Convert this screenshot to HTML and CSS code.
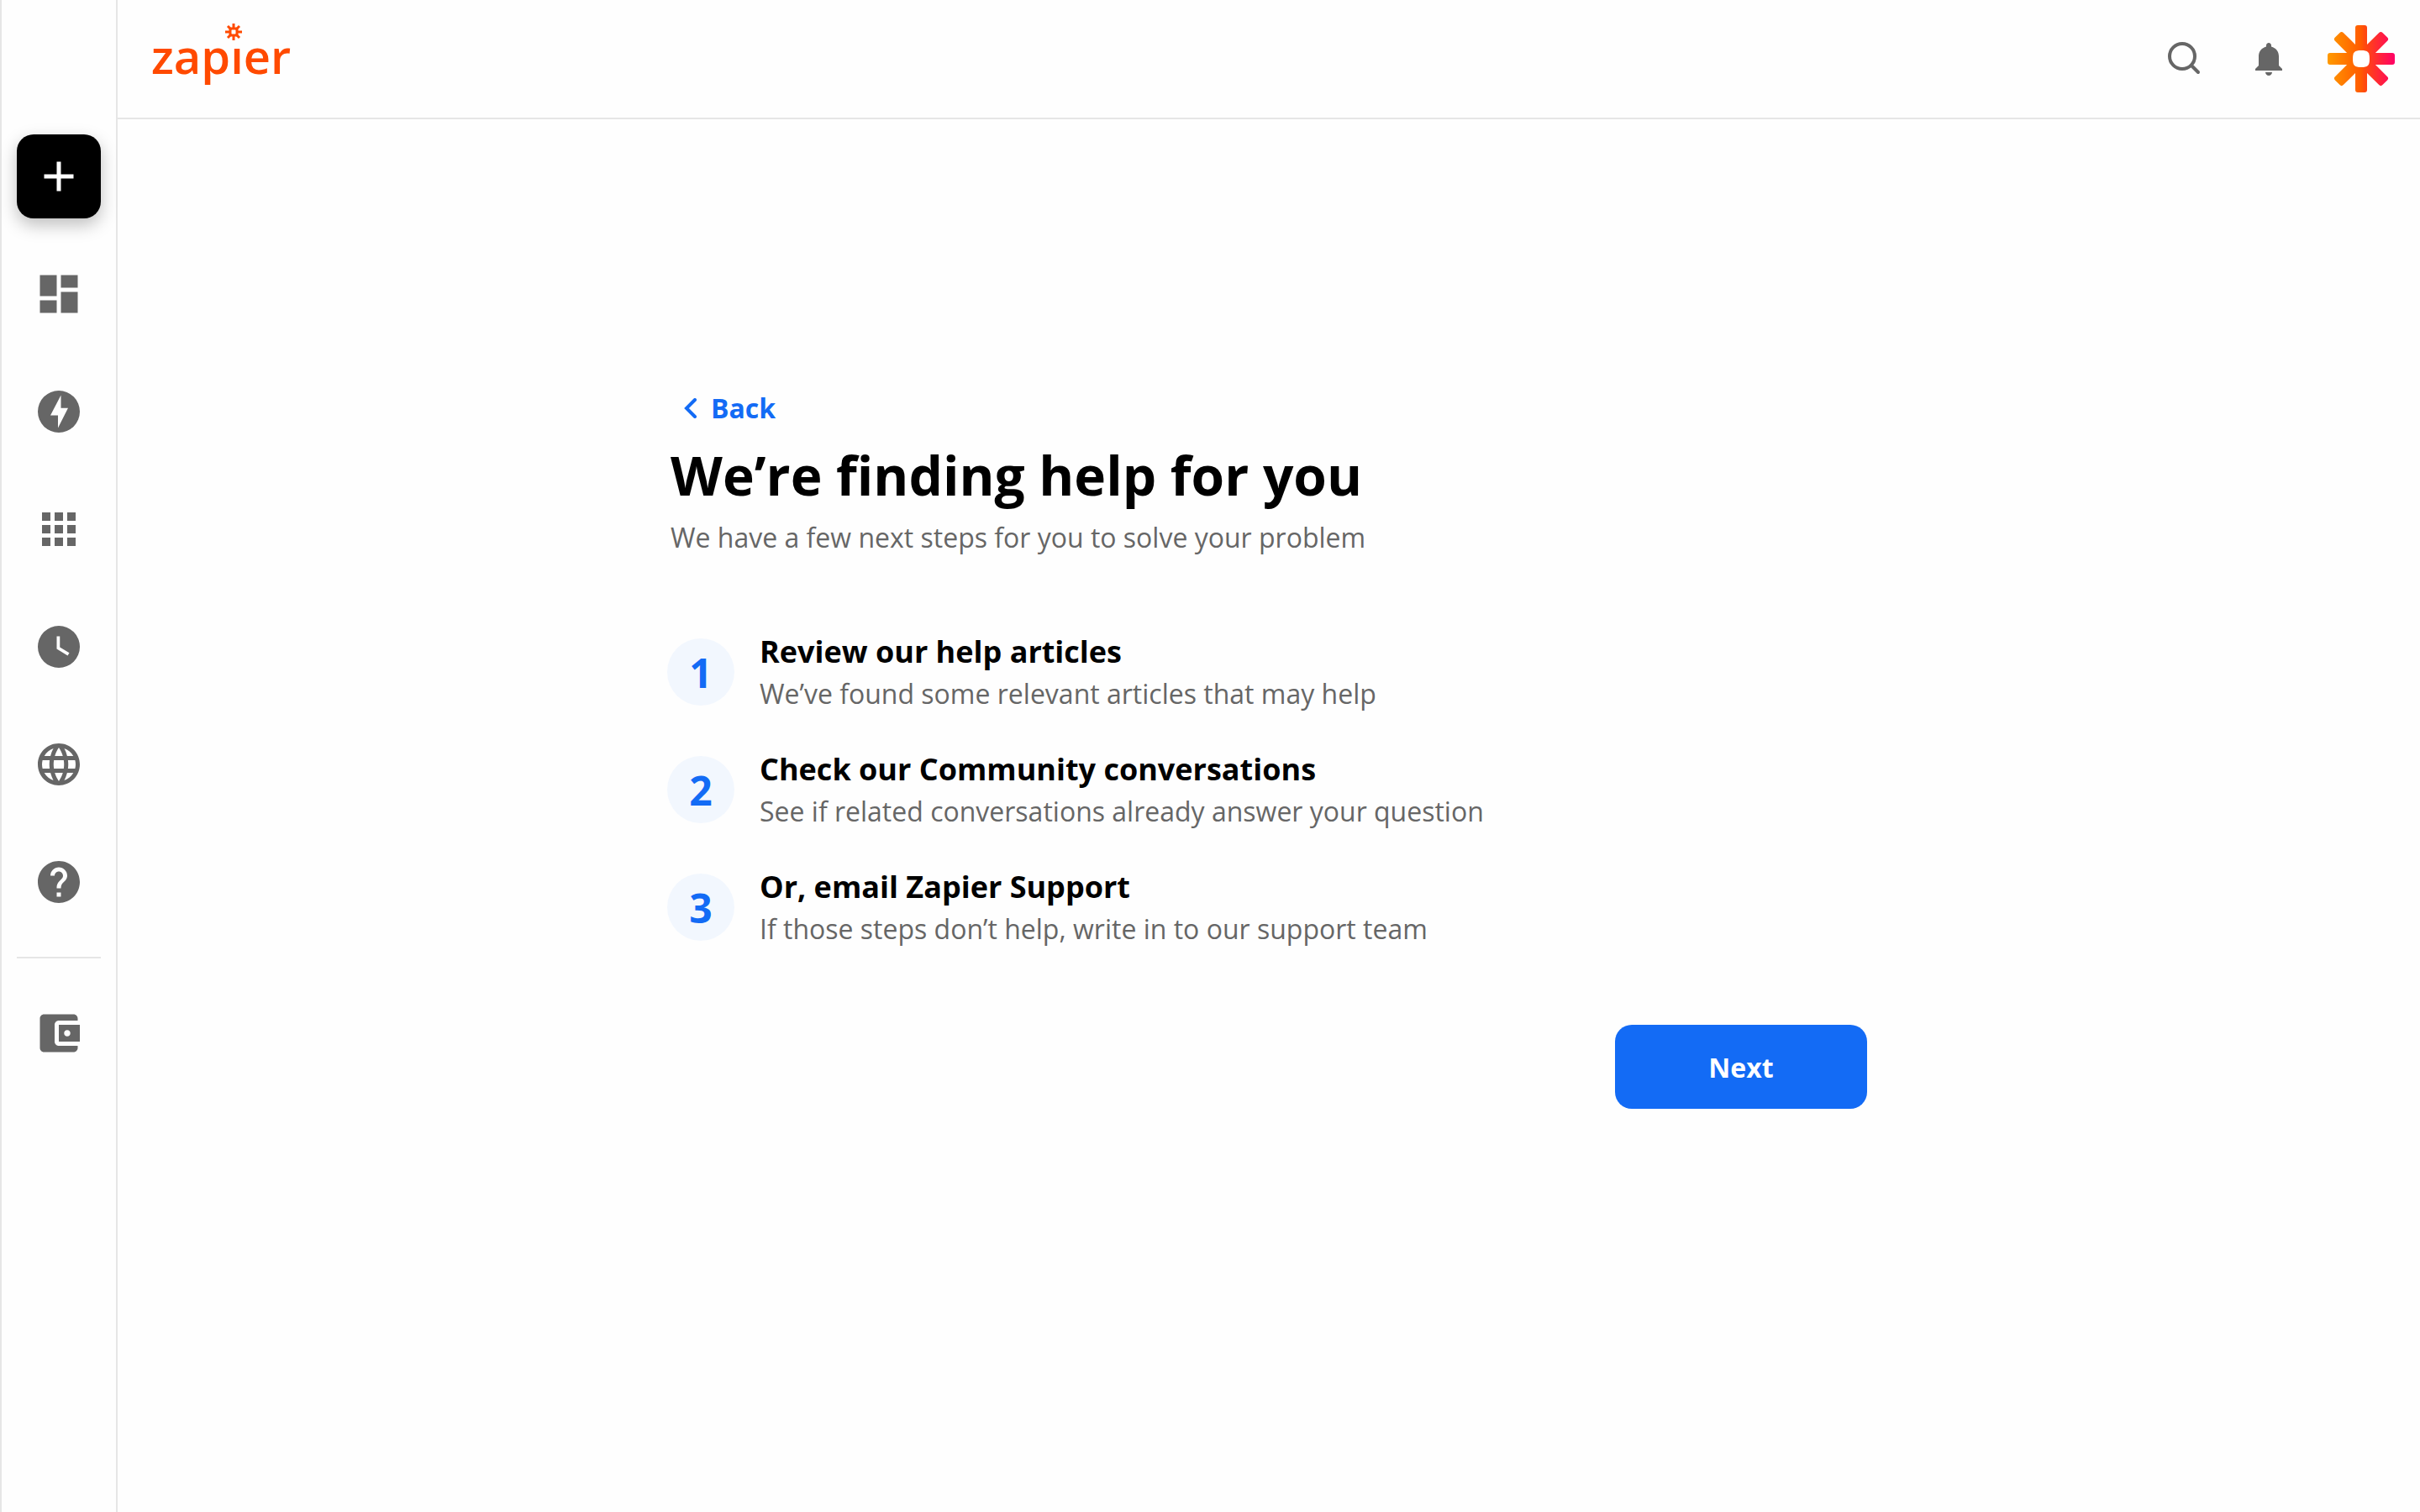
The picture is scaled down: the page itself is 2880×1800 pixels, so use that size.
FILE: index.html
```html
<!DOCTYPE html>
<html lang="en">
<head>
<meta charset="utf-8">
<meta name="viewport" content="width=device-width, initial-scale=1">
<title>Get help | Zapier</title>
<link rel="stylesheet" href="styles.css">
</head>
<body>
<div class="app">
  <nav class="sidebar" aria-label="Main">
    <button class="create" type="button" aria-label="Create Zap">
      <svg class="nav-icon" viewBox="0 0 24 24"><path d="M19 13h-6v6h-2v-6H5v-2h6V5h2v6h6v2z"/></svg>
    </button>
    <a class="nav-link" href="#" aria-label="Dashboard"><svg class="nav-icon" viewBox="0 0 24 24"><path d="M3 13h8V3H3v10zm0 8h8v-6H3v6zm10 0h8V11h-8v10zm0-18v6h8V3h-8z"/></svg></a>
    <a class="nav-link" href="#" aria-label="Zaps"><svg class="nav-icon" viewBox="0 0 24 24"><path fill-rule="evenodd" d="M12 2a10 10 0 1 0 0 20 10 10 0 0 0 0-20zM11.6 19.8v-6H8L13 4.2v6.100h3.400z"/></svg></a>
    <a class="nav-link" href="#" aria-label="Apps"><svg class="nav-icon" viewBox="0 0 24 24"><path d="M4 8h4V4H4v4zm6 12h4v-4h-4v4zm-6 0h4v-4H4v4zm0-6h4v-4H4v4zm6 0h4v-4h-4v4zm6-10v4h4V4h-4zm-6 4h4V4h-4v4zm6 6h4v-4h-4v4zm0 6h4v-4h-4v4z"/></svg></a>
    <a class="nav-link" href="#" aria-label="History"><svg class="nav-icon" viewBox="0 0 24 24"><path fill-rule="evenodd" d="M12 2a10 10 0 1 0 0 20 10 10 0 0 0 0-20zm4.200 14.200L11 13V7h1.500v5.200l4.500 2.700z"/></svg></a>
    <a class="nav-link" href="#" aria-label="Explore"><svg class="nav-icon" viewBox="0 0 24 24"><path d="M11.990 2C6.470 2 2 6.480 2 12s4.470 10 9.990 10C17.520 22 22 17.520 22 12S17.520 2 11.990 2zm6.930 6h-2.950c-.32-1.250-.78-2.450-1.380-3.560 1.840.63 3.370 1.910 4.330 3.560zM12 4.040c.83 1.200 1.480 2.530 1.910 3.960h-3.820c.43-1.430 1.080-2.760 1.910-3.960zM4.260 14C4.100 13.360 4 12.690 4 12s.1-1.360.26-2h3.380c-.08.66-.14 1.320-.14 2 0 .68.06 1.340.14 2H4.260zm.82 2h2.950c.32 1.250.78 2.450 1.380 3.560-1.840-.63-3.370-1.900-4.330-3.560zm2.950-8H5.080c.96-1.660 2.490-2.930 4.330-3.560C8.810 5.550 8.350 6.750 8.030 8zM12 19.960c-.83-1.200-1.480-2.530-1.910-3.960h3.820c-.43 1.430-1.080 2.760-1.910 3.960zM14.340 14H9.660c-.09-.66-.16-1.320-.16-2 0-.68.07-1.350.16-2h4.680c.09.65.16 1.320.16 2 0 .68-.07 1.340-.16 2zm.25 5.560c.6-1.110 1.060-2.310 1.380-3.560h2.950c-.96 1.650-2.490 2.930-4.330 3.560zM16.360 14c.08-.66.14-1.320.14-2 0-.68-.06-1.340-.14-2h3.380c.16.64.26 1.310.26 2s-.1 1.360-.26 2h-3.380z"/></svg></a>
    <a class="nav-link" href="#" aria-label="Help"><svg class="nav-icon" viewBox="0 0 24 24"><path d="M12 2C6.480 2 2 6.480 2 12s4.480 10 10 10 10-4.480 10-10S17.520 2 12 2zm1 17h-2v-2h2v2zm2.070-7.750l-.9.92C13.450 12.900 13 13.500 13 15h-2v-.5c0-1.100.45-2.100 1.170-2.830l1.240-1.260c.37-.36.59-.86.59-1.410 0-1.100-.9-2-2-2s-2 .9-2 2H8c0-2.210 1.790-4 4-4s4 1.790 4 4c0 .88-.36 1.680-.93 2.250z"/></svg></a>
    <hr class="divider">
    <a class="nav-link" href="#" aria-label="Billing"><svg class="nav-icon" viewBox="0 0 24 24"><path d="M21 18v1c0 1.100-.9 2-2 2H5c-1.110 0-2-.9-2-2V5c0-1.100.89-2 2-2h14c1.100 0 2 .9 2 2v1h-9c-1.110 0-2 .9-2 2v8c0 1.100.89 2 2 2h9zm-9-2h10V8H12v8zm4-2.500c-.83 0-1.500-.67-1.500-1.500s.67-1.500 1.500-1.500 1.500.67 1.500 1.500-.67 1.500-1.500 1.500z"/></svg></a>
  </nav>
  <div class="page">
    <header class="topbar">
      <a class="logo" href="#" aria-label="zapier">zapıer<svg class="logo-spark" viewBox="0 0 20 20"><path d="M10 0v6.500M10 13.500V20M0 10h6.500M13.500 10H20M3 3l4.500 4.500M17 3l-4.500 4.500M3 17l4.500-4.500M17 17l-4.500-4.500"/><rect x="6" y="6" width="8" height="8" rx="1"/></svg></a>
      <div class="tools">
        <button class="tool" type="button" aria-label="Search"><svg class="tool-icon" viewBox="0 0 48 48"><g fill="none" stroke="currentColor" stroke-width="4"><circle cx="21" cy="21" r="15"/><path stroke-linecap="round" d="M32 32l8 8"/></g></svg></button>
        <button class="tool" type="button" aria-label="Notifications"><svg class="tool-icon" viewBox="0 0 24 24"><path d="M12 22c1.100 0 2-.9 2-2h-4c0 1.100.9 2 2 2zM18 16v-5.500c0-3-1.700-5-4.500-5.800V4c0-.83-.67-1.500-1.500-1.500s-1.500.67-1.500 1.500v.7C7.700 5.500 6 7.500 6 10.500V16l-2 2v1h16v-1z"/></svg></button>
        <button class="avatar" type="button" aria-label="Account">
          <svg class="avatar-icon" viewBox="0 0 80 80">
            <defs>
              <linearGradient id="spark" gradientUnits="userSpaceOnUse" x1="0" y1="0" x2="80" y2="0"><stop offset="0" stop-color="#ff9a00"/><stop offset=".5" stop-color="#ff5a00"/><stop offset=".55" stop-color="#ff4a0d"/><stop offset="1" stop-color="#ff0066"/></linearGradient>
              <clipPath id="rays"><rect x="33" width="14" height="80" rx="3"/><rect y="33" width="80" height="14" rx="3"/><rect x="33" width="14" height="80" rx="3" transform="rotate(45 40 40)"/><rect x="33" width="14" height="80" rx="3" transform="rotate(-45 40 40)"/></clipPath>
            </defs>
            <rect width="80" height="80" fill="url(#spark)" clip-path="url(#rays)"/>
            <path fill="#fff" d="M40 30c8 0 10 2 10 10s-2 10-10 10-10-2-10-10 2-10 10-10z"/>
          </svg>
        </button>
      </div>
    </header>
    <main class="content">
      <section class="panel">
        <div class="intro">
          <a class="back" href="#"><svg class="back-icon" viewBox="0 0 16 24"><path d="M13 2L3 12l10 10"/></svg>Back</a>
          <h1 class="title">We’re finding help for you</h1>
          <p class="lead">We have a few next steps for you to solve your problem</p>
        </div>
        <ol class="steps">
          <li class="step"><span class="number">1</span><div class="step-text"><h2 class="step-title">Review our help articles</h2><p class="step-note">We’ve found some relevant articles that may help</p></div></li>
          <li class="step"><span class="number">2</span><div class="step-text"><h2 class="step-title">Check our Community conversations</h2><p class="step-note">See if related conversations already answer your question</p></div></li>
          <li class="step"><span class="number">3</span><div class="step-text"><h2 class="step-title">Or, email Zapier Support</h2><p class="step-note">If those steps don’t help, write in to our support team</p></div></li>
        </ol>
        <button class="next" type="button">Next</button>
      </section>
    </main>
  </div>
</div>
</body>
</html>
```
FILE: styles.css
```css
* { box-sizing: border-box; }

body {
  margin: 0;
  background: #fefefe;
  color: #000;
  font-family: "Open Sans", "Noto Sans", sans-serif;
  font-size: 32px;
}

h1, h2, p, ol { margin: 0; padding: 0; }
ol { list-style: none; }
a { color: inherit; text-decoration: none; }
button { border: 0; padding: 0; background: none; font: inherit; cursor: pointer; }
svg { display: block; fill: currentColor; }

.app { display: flex; min-height: 100vh; }

/* Sidebar */
.sidebar {
  flex: none;
  display: flex;
  flex-direction: column;
  align-items: center;
  gap: 40px;
  width: 140px;
  padding-top: 160px;
  border: solid #e6e6e6;
  border-width: 0 2px;
  color: #666;
}
.create, .nav-link {
  display: grid;
  place-items: center;
  width: 100px;
  height: 100px;
}
.create {
  border-radius: 20px;
  background: #000;
  color: #fff;
  box-shadow: 0 8px 20px rgba(0, 0, 0, .25);
}
.nav-icon { width: 60px; height: 60px; }
.divider {
  width: 100px;
  height: 2px;
  margin: -1px 0;
  border: 0;
  background: #e6e6e6;
}

/* Top bar */
.page { flex: 1; min-width: 0; }
.topbar {
  display: flex;
  justify-content: space-between;
  align-items: center;
  height: 142px;
  padding: 0 30px 0 40px;
  border-bottom: 2px solid #e6e6e6;
}
.logo {
  position: relative;
  padding-bottom: 8px;
  color: #ff4a00;
  font-family: "Open Sans", sans-serif;
  font-weight: 600;
  font-size: 56px;
  line-height: 60px;
}
.logo-spark {
  position: absolute;
  top: -8px;
  left: 88px;
  width: 20px;
  height: 20px;
  fill: none;
  stroke: currentColor;
  stroke-width: 3;
}
.tools { display: flex; align-items: center; gap: 40px; color: #666; }
.tool { display: grid; place-items: center; width: 60px; height: 48px; color: #666; }
.tool-icon { width: 48px; height: 48px; }
.avatar-icon { width: 80px; height: 80px; }

/* Help steps */
.content { padding: 314px 4px 80px 0; }
.panel {
  display: flex;
  flex-direction: column;
  max-width: 1428px;
  margin: 0 auto;
}
.intro { padding: 0 4px; }
.back {
  display: inline-flex;
  align-items: center;
  gap: 16px;
  padding-left: 16px;
  color: #136bf5;
  font-weight: 700;
  line-height: 60px;
}
.back-icon {
  width: 16px;
  height: 24px;
  fill: none;
  stroke: currentColor;
  stroke-width: 4;
  stroke-linecap: round;
}
.title { font-weight: 700; font-size: 64px; line-height: 100px; }
.lead { color: #666; line-height: 48px; }
.steps { display: grid; gap: 40px; padding-top: 86px; }
.step { display: flex; align-items: center; gap: 30px; }
.number {
  flex: none;
  display: grid;
  place-items: center;
  width: 80px;
  height: 80px;
  border-radius: 50%;
  background: #f2f7fe;
  color: #136bf5;
  font-weight: 700;
  font-size: 48px;
}
.step-title { font-weight: 700; font-size: 36px; line-height: 52px; }
.step-note { color: #666; line-height: 48px; }
.next {
  align-self: flex-end;
  width: 300px;
  height: 100px;
  margin-top: 90px;
  border-radius: 20px;
  background: #136bf5;
  color: #fff;
  font-weight: 700;
}
```
